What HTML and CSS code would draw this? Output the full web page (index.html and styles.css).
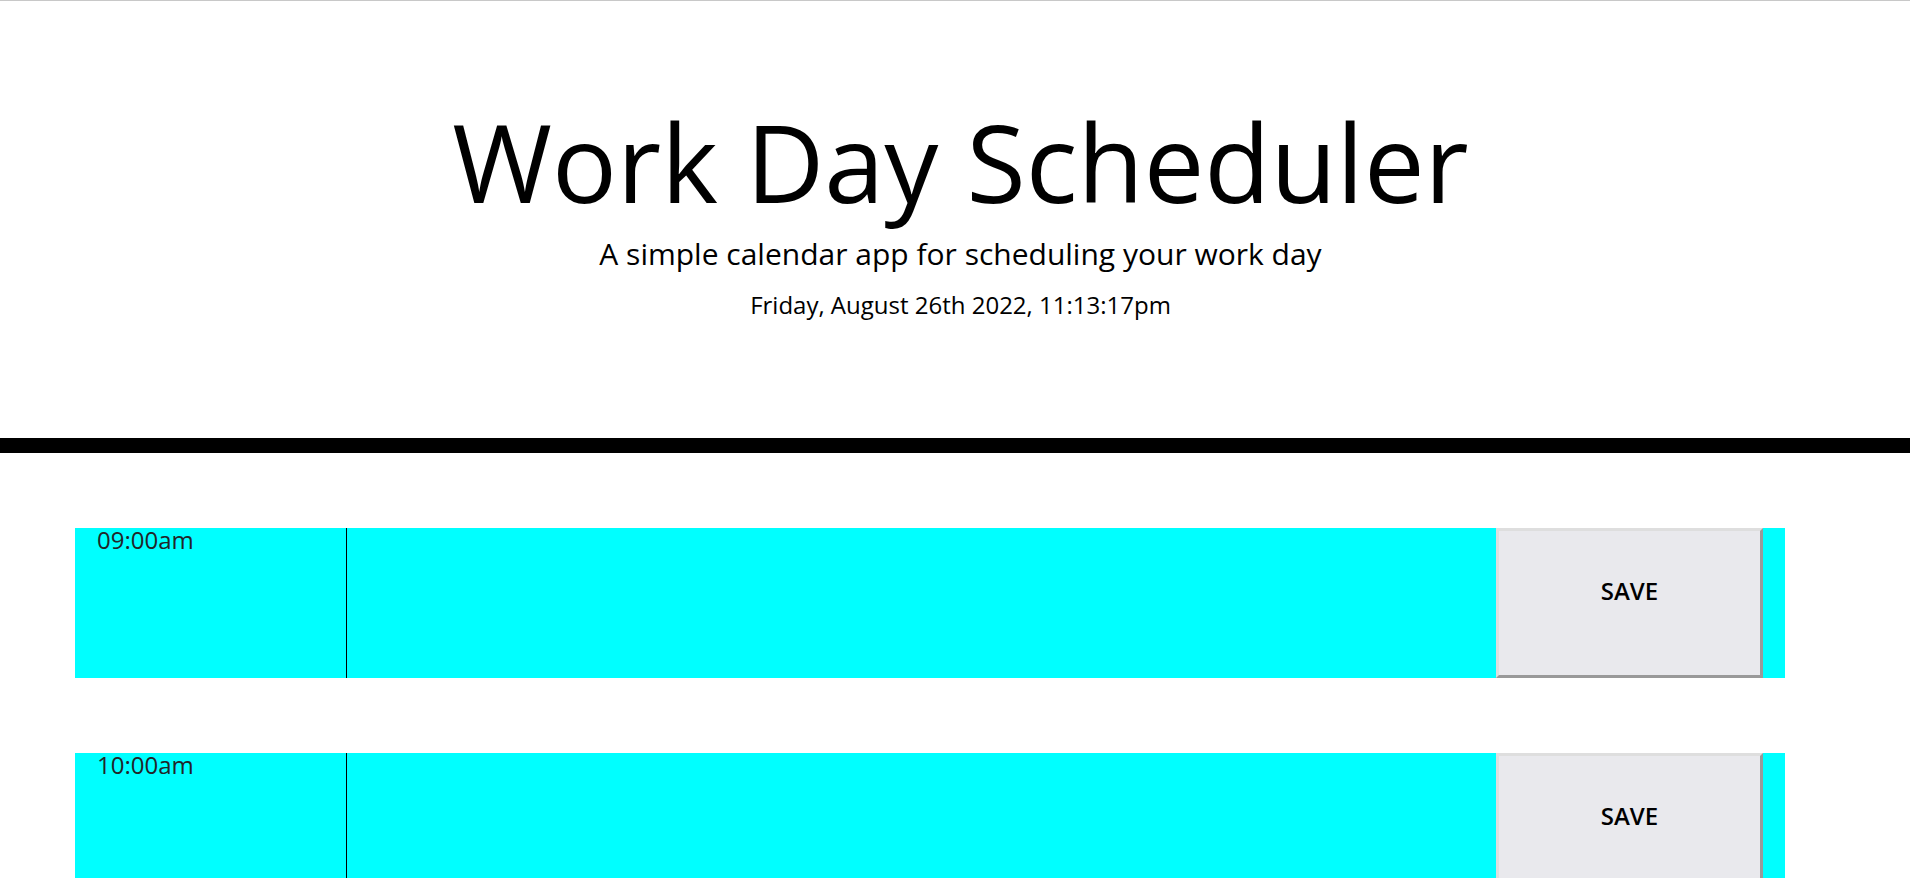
FILE: index.html
```html
<!DOCTYPE html>
<html lang="en">
<head>
<meta charset="utf-8">
<title>Work Day Scheduler</title>
<link rel="stylesheet" href="styles.css">
</head>
<body>
<header class="jumbotron">
  <h1 class="title">Work Day Scheduler</h1>
  <p class="lead">A simple calendar app for scheduling your work day</p>
  <p class="current-day">Friday, August 26th 2022, 11:13:17pm</p>
</header>
<main class="schedule">
  <div class="time-block future">
    <div class="hour">09:00am</div>
    <textarea class="description"></textarea>
    <button class="save-btn">SAVE</button>
  </div>
  <div class="time-block future">
    <div class="hour">10:00am</div>
    <textarea class="description"></textarea>
    <button class="save-btn">SAVE</button>
  </div>
</main>
</body>
</html>
```

FILE: styles.css
```css
html, body {
  margin: 0;
  padding: 0;
}
body {
  font-family: "Open Sans", "Liberation Sans", sans-serif;
  line-height: 1;
  color: #212529;
  background: #ffffff;
  border-top: 1px solid #c8c8c8;
}
.jumbotron {
  text-align: center;
  color: #000000;
  padding: 107px 0 121px 11px;
  border-bottom: 15px solid #000000;
}
.title {
  margin: 0;
  font-size: 108px;
  font-weight: 400;
  line-height: 1;
}
.lead {
  margin: 23px 0 0;
  font-size: 30px;
  font-weight: 400;
  line-height: 1;
}
.current-day {
  margin: 24px 0 0;
  font-size: 24px;
  line-height: 1;
}
.schedule {
  padding-top: 75px;
}
.time-block {
  display: flex;
  height: 150px;
  margin: 0 125px 75px 75px;
  padding-right: 22px;
}
.future {
  background-color: #00ffff;
}
.hour {
  width: 249px;
  padding-left: 22px;
  font-size: 24px;
  line-height: 1;
  color: #212529;
  border-right: 1px solid #000000;
}
.description {
  flex: 1;
  margin: 0;
  padding: 0;
  border: none;
  background: transparent;
  resize: none;
  font-family: inherit;
  font-size: 24px;
}
.save-btn {
  width: 267px;
  margin: 0;
  padding: 48px 0 0;
  display: flex;
  justify-content: center;
  align-items: flex-start;
  background-color: #e9e9ed;
  border-style: solid;
  border-width: 3px;
  border-color: #dedede #999999 #999999 #dedede;
  font-family: "Open Sans", "Liberation Sans", sans-serif;
  font-size: 24px;
  font-weight: 600;
  line-height: 1;
  color: #000000;
}
```
